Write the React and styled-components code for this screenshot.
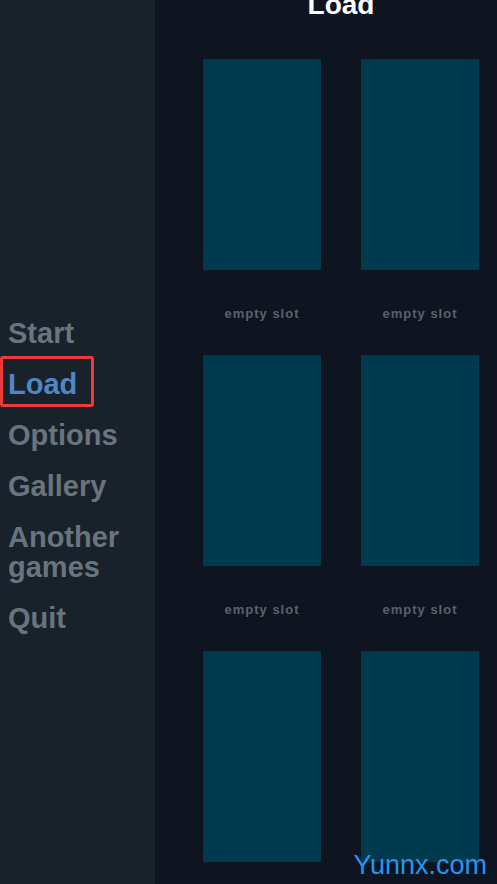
import React from 'react';
import styled, { createGlobalStyle } from 'styled-components';

const GlobalStyle = createGlobalStyle`
  html, body {
    margin: 0;
    padding: 0;
    height: 100%;
    overflow: hidden;
    background: #0f1520;
  }
  body {
    font-family: "Liberation Sans", Arial, sans-serif;
  }
`;

const Screen = styled.div`
  display: flex;
  width: 100vw;
  height: 100vh;
  overflow: hidden;
  position: relative;
`;

const Sidebar = styled.nav`
  width: 155px;
  flex-shrink: 0;
  background: #19222b;
  display: flex;
  flex-direction: column;
  gap: 21px;
  padding-top: 318px;
  box-sizing: border-box;
`;

const MenuItem = styled.div`
  position: relative;
  padding-left: 8px;
  font-size: 29px;
  font-weight: bold;
  line-height: 30px;
  color: ${(props) => (props.active ? '#4f86c6' : '#69747e')};
  cursor: pointer;

  ${(props) =>
    props.highlighted &&
    `
    &::after {
      content: '';
      position: absolute;
      left: 0;
      top: -13px;
      width: 94px;
      height: 51px;
      box-sizing: border-box;
      border: 3px solid #f03a3a;
      border-radius: 3px;
    }
  `}
`;

const Main = styled.main`
  flex: 1;
  display: flex;
  flex-direction: column;
  padding: 0 18px 0 48px;
  box-sizing: border-box;
`;

const Title = styled.h1`
  margin: -10px 0 39px;
  text-align: center;
  font-size: 28px;
  line-height: 30px;
  font-weight: bold;
  color: #ffffff;
`;

const SlotGrid = styled.div`
  display: grid;
  grid-template-columns: repeat(2, 118px);
  column-gap: 40px;
`;

const Slot = styled.div`
  display: flex;
  flex-direction: column;
`;

const Thumb = styled.div`
  height: 211px;
  background: #003a4f;
  box-shadow: inset 0 0 0 1px #02394c;
`;

const SlotLabel = styled.div`
  height: 85px;
  padding-top: 2px;
  box-sizing: border-box;
  display: flex;
  align-items: center;
  justify-content: center;
  font-size: 13px;
  font-weight: bold;
  letter-spacing: 1px;
  color: #59626d;
`;

const Watermark = styled.div`
  position: absolute;
  right: 10px;
  bottom: 4px;
  font-size: 27px;
  line-height: 30px;
  color: #2196f3;
`;

const menu = [
  { label: 'Start' },
  { label: 'Load', active: true },
  { label: 'Options' },
  { label: 'Gallery' },
  { label: ['Another', 'games'] },
  { label: 'Quit' },
];

const App = () => (
  <>
    <GlobalStyle />
    <Screen>
      <Sidebar>
        {menu.map((item, index) => (
          <MenuItem key={index} active={item.active} highlighted={item.active}>
            {Array.isArray(item.label)
              ? item.label.map((line) => <div key={line}>{line}</div>)
              : item.label}
          </MenuItem>
        ))}
      </Sidebar>
      <Main>
        <Title>Load</Title>
        <SlotGrid>
          {Array.from({ length: 6 }).map((_, index) => (
            <Slot key={index}>
              <Thumb />
              <SlotLabel>empty slot</SlotLabel>
            </Slot>
          ))}
        </SlotGrid>
      </Main>
      <Watermark>Yunnx.com</Watermark>
    </Screen>
  </>
);

export default App;
